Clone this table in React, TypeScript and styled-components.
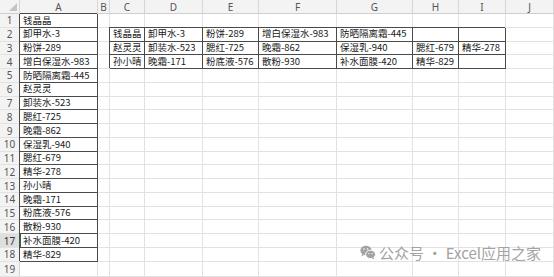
import React from "react";
import styled, { createGlobalStyle } from "styled-components";

const Global = createGlobalStyle`
  html, body { margin: 0; padding: 0; background: #fff; }
  body { font-family: "Noto Sans CJK SC", "Noto Sans", sans-serif; }
`;

const COLS = ["A", "B", "C", "D", "E", "F", "G", "H", "I", "J"];
const WIDTHS = [20, 78, 12, 35, 58, 56, 78, 76, 46, 47, 48];

const colA = [
  "钱晶晶", "卸甲水-3", "粉饼-289", "增白保湿水-983", "防晒隔离霜-445",
  "赵灵灵", "卸装水-523", "腮红-725", "晚霜-862", "保湿乳-940",
  "腮红-679", "精华-278", "孙小晴", "晚霜-171", "粉底液-576",
  "散粉-930", "补水面膜-420", "精华-829",
];

const table: string[][] = [
  ["钱晶晶", "卸甲水-3", "粉饼-289", "增白保湿水-983", "防晒隔离霜-445", "", ""],
  ["赵灵灵", "卸装水-523", "腮红-725", "晚霜-862", "保湿乳-940", "腮红-679", "精华-278"],
  ["孙小晴", "晚霜-171", "粉底液-576", "散粉-930", "补水面膜-420", "精华-829", ""],
];

const Frame = styled.div`
  position: relative;
  width: 554px;
  height: 277px;
  overflow: hidden;
  background: #fff;
`;

const Sheet = styled.div`
  display: grid;
  grid-template-columns: ${WIDTHS.map((w) => w + "px").join(" ")};
  grid-template-rows: 14px repeat(18, 13.78px) 1fr;
  width: 554px;
  height: 277px;
`;

const HeaderBase = styled.div`
  background: #f3f3f3;
  color: #555;
  font-family: "Noto Sans", "Noto Sans CJK SC", sans-serif;
  font-size: 10px;
  display: flex;
  align-items: center;
  justify-content: center;
  border-right: 1px solid #d6d6d6;
  border-bottom: 1px solid #cfcfcf;
  box-sizing: border-box;
  line-height: 1;
`;

const Corner = styled(HeaderBase)`
  position: relative;
  &::after {
    content: "";
    position: absolute;
    right: 2px;
    bottom: 2px;
    width: 0;
    height: 0;
    border-left: 8px solid transparent;
    border-bottom: 8px solid #c4c4c4;
  }
`;

const ColHeader = styled(HeaderBase)``;

const RowHeader = styled(HeaderBase)<{ $active?: boolean }>`
  background: ${(p) => (p.$active ? "#dedede" : "#f3f3f3")};
  color: ${(p) => (p.$active ? "#333" : "#555")};
  border-bottom-color: #e2e2e2;
`;

const Cell = styled.div<{ $boxed?: boolean; $active?: boolean }>`
  box-sizing: border-box;
  border-right: 1px solid ${(p) => (p.$boxed ? "#4a4a4a" : "#e2e2e2")};
  border-bottom: 1px solid ${(p) => (p.$boxed ? "#4a4a4a" : "#e2e2e2")};
  box-shadow: ${(p) =>
    p.$active
      ? "-1px -1px 0 0 #4a4a4a, inset 1px 0 0 0 #1e7145"
      : p.$boxed
      ? "-1px -1px 0 0 #4a4a4a"
      : "none"};
  font-size: 9.5px;
  color: #1a1a1a;
  padding-left: 3px;
  display: flex;
  align-items: center;
  white-space: nowrap;
  overflow: visible;
  line-height: 1;
`;

const Watermark = styled.div`
  position: absolute;
  left: 360px;
  top: 245px;
  display: flex;
  align-items: center;
  gap: 3px;
  color: #a3a3a3;
  font-size: 15px;
  font-family: "Noto Sans CJK SC", "Noto Sans", sans-serif;
  line-height: 1;
`;

const WeChat = () => (
  <svg width="16" height="15" viewBox="0 0 16 15">
    <ellipse cx="6" cy="5.5" rx="5.6" ry="4.8" fill="#a3a3a3" />
    <path d="M2.2 9 L1.6 11.4 L4.4 9.8 Z" fill="#a3a3a3" />
    <ellipse cx="10.6" cy="9.4" rx="5" ry="4.2" fill="#a3a3a3" stroke="#fff" strokeWidth="1" />
    <path d="M13.6 12.4 L14.4 14.4 L11.8 13.2 Z" fill="#a3a3a3" />
    <circle cx="4" cy="4" r="0.8" fill="#fff" />
    <circle cx="7.6" cy="4" r="0.8" fill="#fff" />
    <circle cx="9" cy="8.6" r="0.7" fill="#fff" />
    <circle cx="12.2" cy="8.6" r="0.7" fill="#fff" />
  </svg>
);

function cellValue(row: number, col: number): string {
  if (col === 0 && row >= 1 && row <= 18) return colA[row - 1];
  if (row >= 2 && row <= 4 && col >= 2 && col <= 8) return table[row - 2][col - 2];
  return "";
}

function isBoxed(row: number, col: number): boolean {
  if (col === 0 && row >= 1 && row <= 18) return true;
  if (row >= 2 && row <= 4 && col >= 2 && col <= 8) return true;
  return false;
}

export default function App() {
  const rows = Array.from({ length: 19 }, (_, i) => i + 1);
  return (
    <Frame>
      <Global />
      <Sheet>
        <Corner />
        {COLS.map((c) => (
          <ColHeader key={c}>{c}</ColHeader>
        ))}
        {rows.map((r) => (
          <React.Fragment key={r}>
            <RowHeader $active={r === 17}>{r}</RowHeader>
            {COLS.map((c, ci) => (
              <Cell key={c} $boxed={isBoxed(r, ci)} $active={r === 17 && ci === 0}>
                {cellValue(r, ci)}
              </Cell>
            ))}
          </React.Fragment>
        ))}
      </Sheet>
      <Watermark>
        <WeChat />
        <span>公众号 · Excel应用之家</span>
      </Watermark>
    </Frame>
  );
}
